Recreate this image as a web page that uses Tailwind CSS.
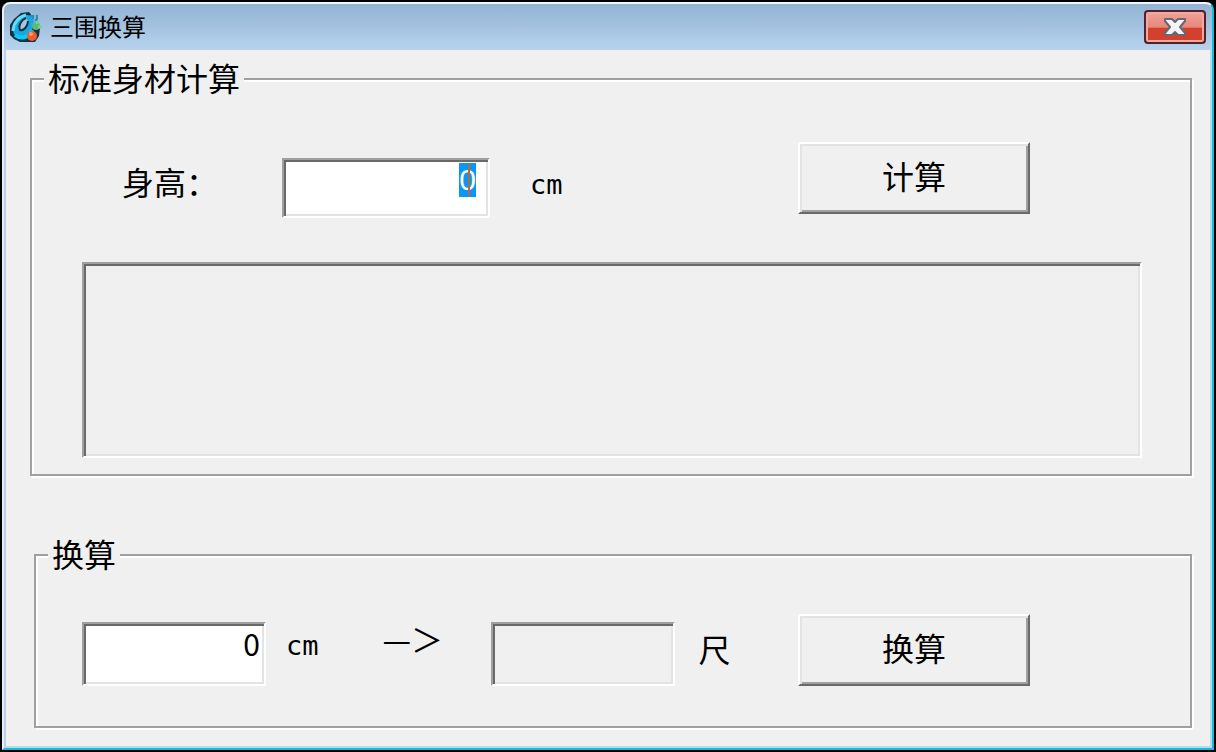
<!DOCTYPE html>
<html lang="zh-CN">
  <head>
    <meta charset="UTF-8" />
    <meta name="viewport" content="width=device-width, initial-scale=1.0" />
    <title>三围换算</title>
    <script src="https://cdn.jsdelivr.net/npm/@tailwindcss/browser@4"></script>
  </head>
  <body class="bg-black font-['Noto_Sans_CJK_SC',sans-serif] text-black">
    <!-- WINDOW -->
    <div class="flex min-h-screen flex-col border-2 border-black">
      <div class="flex flex-1 flex-col overflow-hidden rounded-t-lg border-2 border-t-[#eef5fb] border-r-[#10bfd6] border-b-[#10bfd6] border-l-[#e6eef8] bg-[#f0f0f0]">
        <!-- TITLE BAR -->
        <header class="flex h-[46px] items-center bg-linear-to-b from-[#92b3d3] to-[#b7d3ee] pr-1.5 pl-1">
          <svg class="size-9" viewBox="0 0 36 36" fill="none" aria-hidden="true">
            <path d="M21 3 13 4 6 10 2 16 2 26 6 30 12 33 27 33 31 27 32 19 30 13 25 8Z" fill="#17303f" />
            <path d="M24 6 30 5 30 14 25 15Z" fill="#8fb2cf" />
            <path d="M18 6C9 8 3 19 6 25s15 5 18-4 3-15-6-15Z" fill="#18a9e2" />
            <path d="M18 6C10 8 5 15 5 22" stroke="#65dcf8" stroke-width="3" />
            <path d="M7 26c6 5 15 2 17-5" stroke="#06cdf5" stroke-width="4" />
            <path d="M18 9c-5 2-8 8-6 12 4 1 8-4 8-9" fill="#aac6df" stroke="#17303f" stroke-width="2" />
            <path d="M22 7h3v3M29 6v4l-2 2" stroke="#258eb7" stroke-width="2" />
            <circle cx="28" cy="17" r="4" fill="#59b77d" />
            <path d="M29 12v3m1 3h4" stroke="#7ccf92" stroke-width="3" />
            <circle cx="24" cy="27" r="5" fill="#ee5b2c" />
            <circle cx="23" cy="25" r="2" fill="#ff9a70" />
          </svg>
          <h1 class="ml-1.5 pb-[3px] text-2xl leading-8">三围换算</h1>
          <button type="button" aria-label="关闭" class="ml-auto flex h-[34px] w-[62px] items-center justify-center rounded border-2 border-[#54202c] bg-linear-to-b from-[#f0a398] from-0% via-[#e8877b] via-50% to-[#d2402e] to-55% shadow-[inset_0_0_0_2px_#f3a99e]">
            <svg class="h-[18px] w-[22px]" viewBox="0 0 22 18" aria-hidden="true">
              <path d="M1 1h7l3 3 3-3h7v2l-5 6 5 6v2h-7l-3-3-3 3H1v-2l5-6-5-6Z" fill="#f4f4f4" stroke="#626878" stroke-width="2" stroke-linejoin="round" />
            </svg>
          </button>
        </header>

        <!-- CONTENT -->
        <main class="flex-1 border-2 border-t-0 border-r-[#b5dcee] border-b-[#b5dcee] border-l-[#b9d1ea] pr-[18px] pb-[18px] pl-6 text-[32px] leading-8">
          <fieldset class="mt-[11px] border-2 border-[#a0a0a0] px-3 pb-4 shadow-[inset_2px_2px_#fff,2px_2px_#fff]">
            <legend class="bg-[#f0f0f0] px-1 pb-1">标准身材计算</legend>
            <div class="pt-[45px] pr-9 pl-[38px]">
              <div class="flex items-start">
                <label for="height" class="mt-[23px] ml-10 w-24">身高：</label>
                <div class="relative mt-4 ml-16">
                  <input id="height" type="text" value="0" class="block h-[60px] w-[208px] border-2 border-t-[#a0a0a0] border-r-white border-b-white border-l-[#a0a0a0] bg-white pt-1 pr-3 pb-5 pl-1 text-right font-['Liberation_Sans',sans-serif] text-[30px] leading-8 shadow-[inset_2px_2px_#696969,inset_-2px_-2px_#e3e3e3] outline-none selection:bg-[#0a96f8] selection:text-white" />
                  <span class="absolute top-1.5 right-5 h-8 w-0.5 bg-[#b56a38]"></span>
                </div>
                <span class="mt-[27px] ml-10 font-['DejaVu_Sans_Mono',monospace] text-[27px]">cm</span>
                <button id="calc" type="button" class="mr-28 ml-auto h-[72px] w-[232px] border-2 border-t-white border-r-[#696969] border-b-[#696969] border-l-white bg-[#f0f0f0] pb-1.5 shadow-[inset_2px_2px_#e3e3e3,inset_-2px_-2px_#a0a0a0]">计算</button>
              </div>
              <output id="result" for="height" class="mt-11 block h-[196px] border-2 border-t-[#a0a0a0] border-r-white border-b-white border-l-[#a0a0a0] p-2 shadow-[inset_2px_2px_#696969,inset_-2px_-2px_#e3e3e3]"></output>
            </div>
          </fieldset>

          <fieldset class="mt-[61px] ml-1 border-2 border-[#a0a0a0] px-3 pb-10 shadow-[inset_2px_2px_#fff,2px_2px_#fff]">
            <legend class="bg-[#f0f0f0] px-1 pb-1">换算</legend>
            <div class="flex items-start pt-[41px] pr-9 pl-[34px]">
              <input id="cm" type="text" value="0" aria-label="cm" class="mt-2 h-16 w-[184px] border-2 border-t-[#a0a0a0] border-r-white border-b-white border-l-[#a0a0a0] bg-white pt-0.5 pr-1 pb-6 pl-1 text-right text-[30px] leading-8 shadow-[inset_2px_2px_#696969,inset_-2px_-2px_#e3e3e3] outline-none" />
              <label for="cm" class="mt-4 ml-5 font-['DejaVu_Sans_Mono',monospace] text-[27px]">cm</label>
              <span class="mt-2 ml-16 w-16 whitespace-nowrap">—＞</span>
              <output id="chi" for="cm" class="mt-2 ml-11 h-16 w-[184px] border-2 border-t-[#a0a0a0] border-r-white border-b-white border-l-[#a0a0a0] p-1 text-right shadow-[inset_2px_2px_#696969,inset_-2px_-2px_#e3e3e3]"></output>
              <span class="mt-[18px] ml-6">尺</span>
              <button id="convert" type="button" class="mr-28 ml-auto h-[72px] w-[232px] border-2 border-t-white border-r-[#696969] border-b-[#696969] border-l-white bg-[#f0f0f0] pb-1.5 shadow-[inset_2px_2px_#e3e3e3,inset_-2px_-2px_#a0a0a0]">换算</button>
            </div>
          </fieldset>
        </main>
      </div>
    </div>

    <script>
      let heightInput = document.getElementById('height');
      heightInput.focus();
      heightInput.select();

      document.getElementById('convert').addEventListener('click', function () {
        let cm = Number(document.getElementById('cm').value);
        document.getElementById('chi').textContent = ((cm * 3) / 100).toFixed(2);
      });

      document.getElementById('calc').addEventListener('click', function () {
        let h = Number(heightInput.value);
        document.getElementById('result').textContent = `${(h * 0.51).toFixed(1)} / ${(h * 0.34).toFixed(1)} / ${(h * 0.542).toFixed(1)}`;
      });
    </script>
  </body>
</html>
